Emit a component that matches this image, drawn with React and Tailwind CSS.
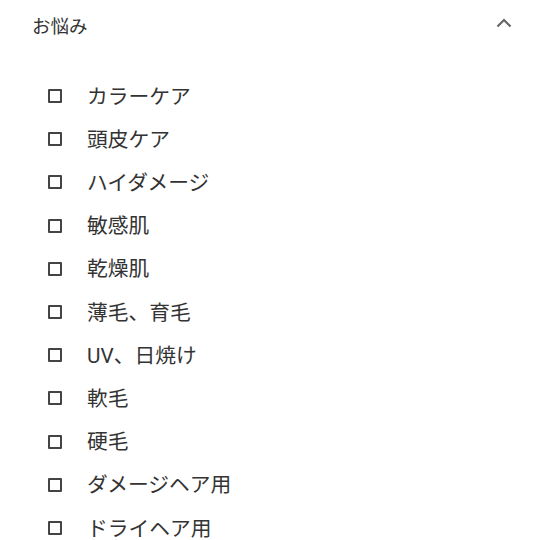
import React from 'react'

const items = [
  'カラーケア',
  '頭皮ケア',
  'ハイダメージ',
  '敏感肌',
  '乾燥肌',
  '薄毛、育毛',
  'UV、日焼け',
  '軟毛',
  '硬毛',
  'ダメージヘア用',
  'ドライヘア用',
]

const App = () => {
  return (
    <div
      className="w-[540px] h-[540px] overflow-hidden bg-white text-[#333]"
      style={{ fontFamily: 'Roboto, "Noto Sans CJK JP", "Noto Sans", sans-serif' }}
    >
      {/* Section header */}
      <div className="flex items-center justify-between h-[55px] pl-[32px] pr-[28px]">
        <span className="text-[18.5px] leading-none">お悩み</span>
        <svg width="16" height="10" viewBox="0 0 16 10" className="mt-[-10px]">
          <polyline points="1.5,8.5 8,2 14.5,8.5" fill="none" stroke="#666" strokeWidth="2.2" />
        </svg>
      </div>

      <ul className="flex flex-col pt-[19.5px]">
        {items.map((label) => (
          <li key={label} className="flex items-center h-[43.2px] pl-[48px]">
            <span className="w-[14px] h-[14px] border-2 border-[#444] rounded-[1px] shrink-0" />
            <span className="ml-[25px] text-[20.75px] leading-none translate-y-[1px]">{label}</span>
          </li>
        ))}
      </ul>
    </div>
  )
}

export default App
